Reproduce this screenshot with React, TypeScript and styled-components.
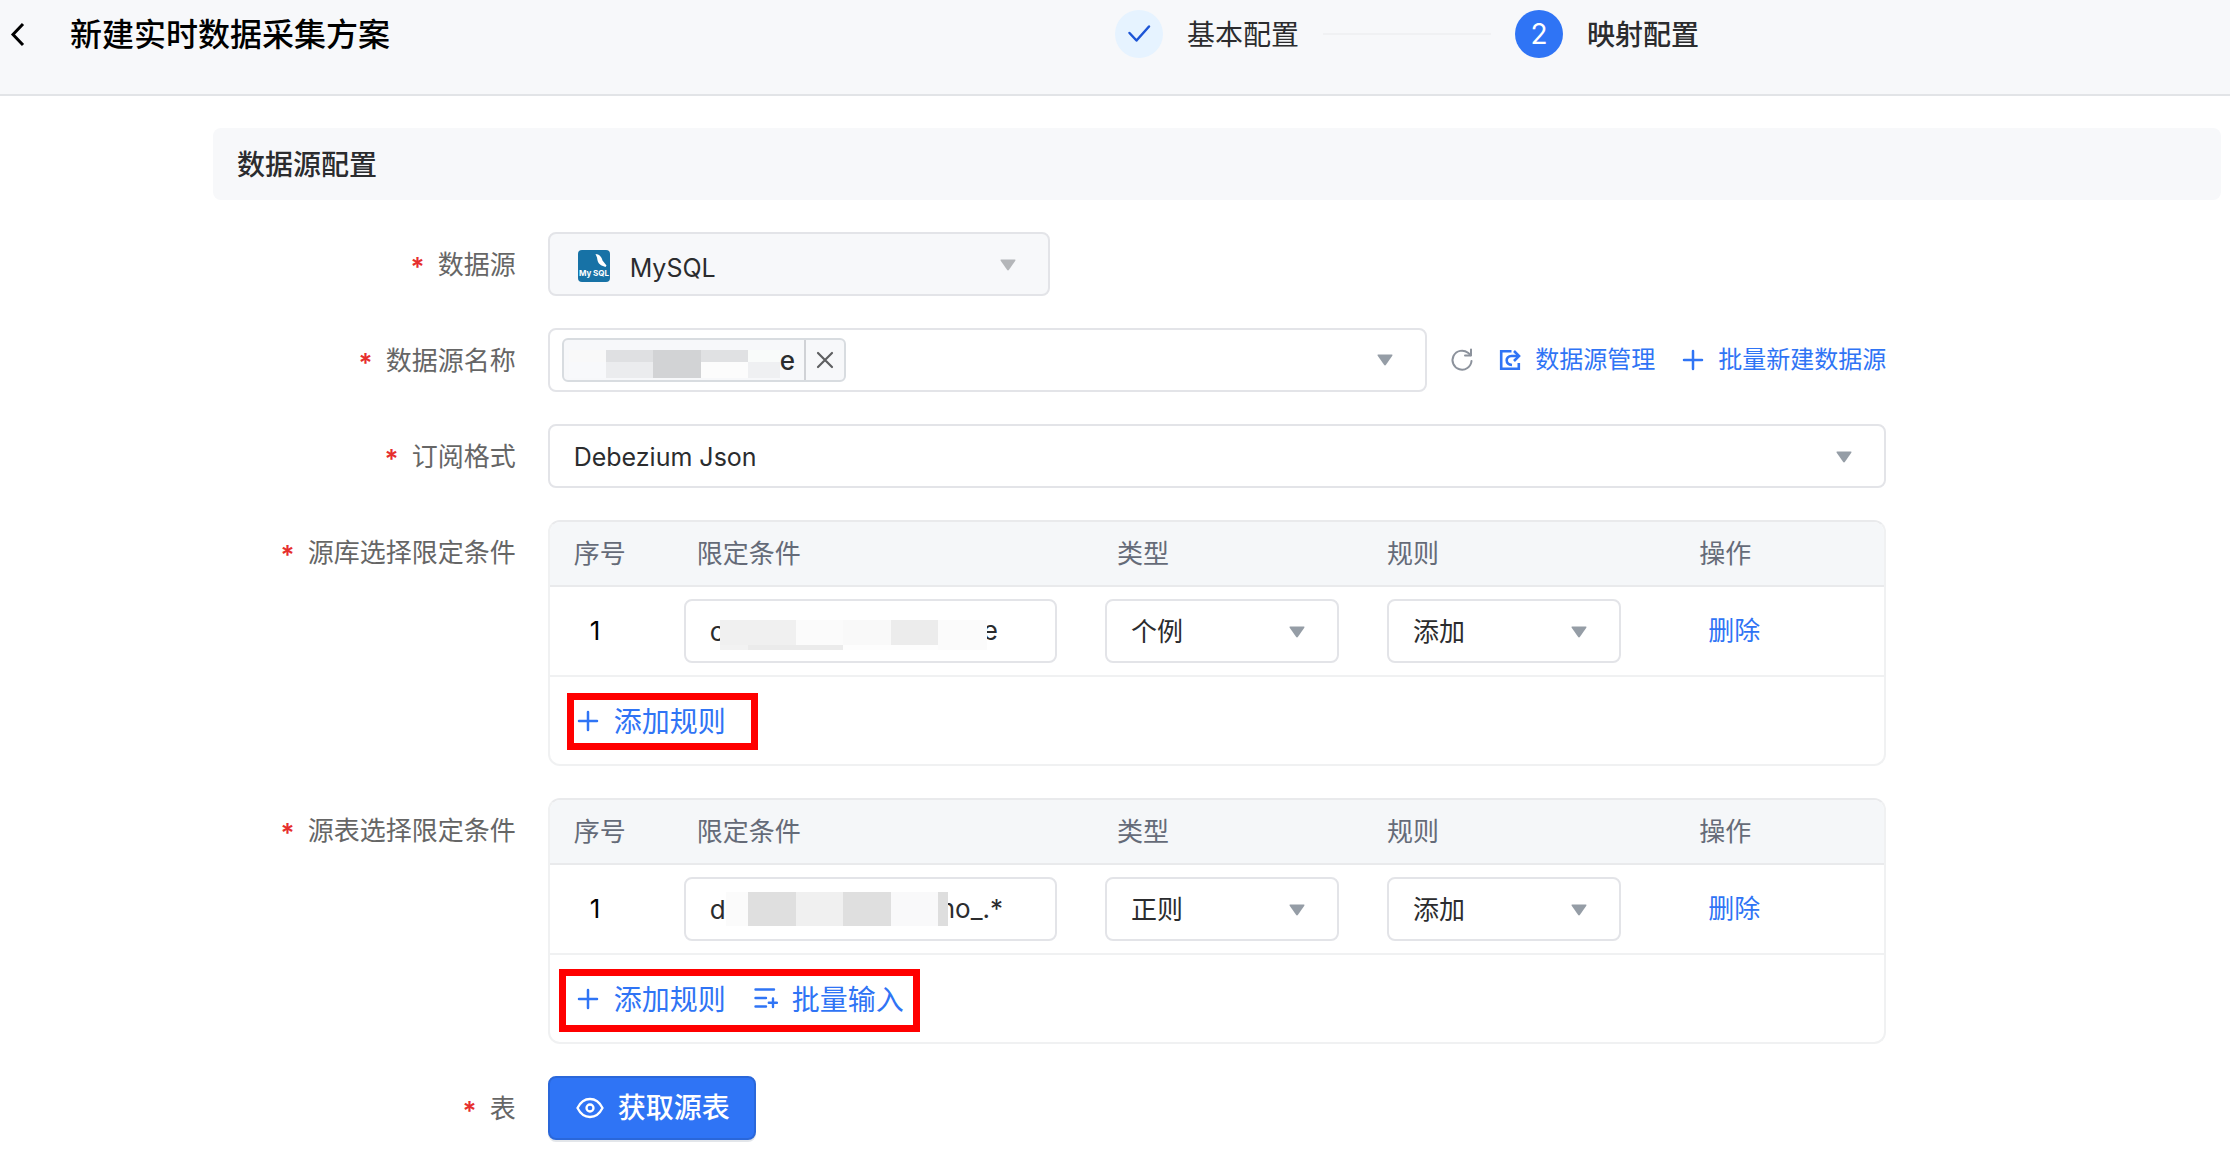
import React, { ReactNode, useState } from "react";
import styled, { createGlobalStyle } from "styled-components";

const color = {
  primary: "#2f74f5",
  primaryEdge: "#2a67da",
  surface: "#f7f8fa",
  headRow: "#f5f7f9",
  line: "#e3e4e8",
  softLine: "#f0f1f2",
  tableLine: "#e9eaec",
  text: "#2b2c2e",
  label: "#666666",
  head: "#656b78",
  arrow: "#959da6",
  danger: "#e62e2e",
};

const GlobalStyle = createGlobalStyle`
  *, *::before, *::after { box-sizing: border-box; }
  body {
    margin: 0;
    background: #fff;
    color: ${color.text};
    font: 400 26px/36px Inter, "Noto Sans CJK SC", sans-serif;
  }
  button, input, select { font: inherit; color: inherit; }
  button { border: 0; padding: 0; background: none; cursor: pointer; }
  svg { display: block; flex: none; }
`;

/* ---------- header ---------- */

const Header = styled.header`
  display: grid;
  grid-template-columns: 1fr 1fr;
  height: 96px;
  padding-top: 10px;
  background: ${color.surface};
  border-bottom: 2px solid #e2e4e7;
`;

const HeaderTitle = styled.div`
  display: flex;
  align-items: center;
  gap: 38px;
  height: 48px;
  padding-left: 4px;
`;

const Title = styled.h1`
  margin: 0;
  padding-top: 2px;
  color: #000;
  font-size: 32px;
  line-height: 48px;
  font-weight: 500;
`;

const Steps = styled.ol`
  display: flex;
  align-items: center;
  gap: 24px;
  height: 48px;
  margin: 0;
  padding: 0;
  list-style: none;
`;

const Step = styled.li<{ $active?: boolean }>`
  display: flex;
  align-items: center;
  gap: 24px;
  font-size: 28px;
  font-weight: ${(p) => (p.$active ? 500 : 400)};
`;

const StepMark = styled.span<{ $active?: boolean }>`
  display: grid;
  place-items: center;
  width: 48px;
  height: 48px;
  border-radius: 50%;
  color: ${(p) => (p.$active ? "#fff" : "#1d55d6")};
  background: ${(p) => (p.$active ? color.primary : "#e6f3ff")};
  font-weight: 400;
`;

const StepLine = styled.li`
  width: 168px;
  height: 2px;
  background: #f0f1f3;
`;

/* Text beside an icon; the padding centres the characters on it. */
const Caption = styled.span`
  padding-top: 2px;
`;

/* ---------- form ---------- */

const Main = styled.main`
  padding: 32px 9px 22px 213px;
`;

const SectionTitle = styled.h2`
  margin: 0 0 32px;
  padding: 2px 24px 0;
  border-radius: 8px;
  background: ${color.surface};
  font-size: 28px;
  line-height: 70px;
  font-weight: 500;
`;

const Form = styled.form`
  display: flex;
  flex-direction: column;
  gap: 32px;
`;

const FormRow = styled.div`
  display: grid;
  grid-template-columns: 4fr 16fr 4fr;
`;

const Label = styled.label`
  display: flex;
  justify-content: flex-end;
  gap: 13px;
  padding-right: 32px;
  color: ${color.label};
  line-height: 66px;
  max-height: 64px;
  white-space: nowrap;
`;

const Required = styled.span`
  padding-top: 2px;
  color: ${color.danger};
  font-weight: 600;
`;

const Controls = styled.div`
  display: flex;
  align-items: center;
  min-width: 0;
`;

const SelectBox = styled.div<{ $width?: string; $muted?: boolean }>`
  display: grid;
  grid-template-columns: minmax(0, 1fr);
  align-items: center;
  width: ${(p) => p.$width ?? "100%"};
  height: 64px;
  border: 2px solid ${color.line};
  border-radius: 8px;
  background: ${(p) => (p.$muted ? color.surface : "#fff")};
  color: ${(p) => (p.$muted ? "#b4b6b9" : color.arrow)};

  > * { grid-area: 1 / 1; }
  > svg { justify-self: end; margin: 2px 32px 0 0; pointer-events: none; }
`;

const NativeSelect = styled.select<{ $icon?: boolean; $latin?: boolean }>`
  width: 100%;
  height: 60px;
  padding: ${(p) => (p.$icon ? 8 : 2)}px 56px 0 ${(p) => (p.$icon ? 80 : 24)}px;
  border: 0;
  outline: 0;
  appearance: none;
  background: transparent;
  color: ${color.text};
  font-size: ${(p) => (p.$latin ? 25 : 26)}px;
  opacity: 1;
`;

const LeadIcon = styled.span`
  margin: 4px 0 0 28px;
  pointer-events: none;
`;

const TagSelect = styled.div`
  display: flex;
  align-items: center;
  flex: 1;
  height: 64px;
  padding: 0 32px 0 12px;
  border: 2px solid ${color.line};
  border-radius: 8px;
  color: ${color.arrow};
`;

const TagInput = styled.input`
  flex: 1;
  min-width: 0;
  border: 0;
  outline: 0;
`;

const Tag = styled.span`
  display: flex;
  align-items: center;
  height: 44px;
  border: 2px solid #d8dce0;
  border-radius: 6px;
  background: ${color.surface};
  color: ${color.text};
`;

const TagText = styled.span`
  display: flex;
  align-items: center;
  width: 240px;
  height: 40px;
  padding-left: 5px;
  font-weight: 500;
`;

const TagClose = styled.button`
  display: grid;
  place-items: center;
  width: 40px;
  height: 40px;
  border-left: 2px solid #d0d2d6;
  color: #5f6062;
`;

const IconButton = styled.button`
  margin-left: 23px;
  color: #8c929c;
`;

const LinkItem = styled.a<{ $gap: number }>`
  display: flex;
  align-items: center;
  gap: 13px;
  margin-left: ${(p) => p.$gap}px;
  color: ${color.primary};
  font-size: 24px;
  text-decoration: none;
  white-space: nowrap;
`;

/* ---------- rule table ---------- */

const TableCard = styled.div`
  width: 100%;
  border: 2px solid ${color.softLine};
  border-top-color: ${color.tableLine};
  border-radius: 12px;
`;

const Table = styled.table`
  width: 100%;
  table-layout: fixed;
  border-spacing: 0;
`;

const HeadCell = styled.th<{ $pad: number }>`
  height: 65px;
  padding: 0 0 0 ${(p) => p.$pad}px;
  border-bottom: 2px solid ${color.tableLine};
  background: ${color.headRow};
  color: ${color.head};
  font-weight: 400;
  text-align: left;

  &:first-child { border-top-left-radius: 10px; }
  &:last-child { border-top-right-radius: 10px; }
`;

const Cell = styled.td<{ $left?: number; $right?: number }>`
  height: 90px;
  padding: 0 ${(p) => p.$right ?? 0}px 0 ${(p) => p.$left ?? 0}px;
  border-bottom: 2px solid ${color.softLine};
`;

const Index = styled.span`
  color: #000;
`;

const TextBox = styled.div`
  display: flex;
  align-items: center;
  height: 64px;
  padding: 0 24px;
  border: 2px solid ${color.line};
  border-radius: 8px;
  overflow: hidden;
`;

const TextInput = styled.input<{ $width: number }>`
  flex: none;
  width: ${(p) => p.$width}px;
  height: 60px;
  padding: 0;
  border: 0;
  outline: 0;
`;

const MaskSvg = styled.svg<{ $overlap: number }>`
  z-index: 1;
  margin-right: ${(p) => -p.$overlap}px;
`;

const TextButton = styled.button<{ $large?: boolean }>`
  display: flex;
  align-items: center;
  gap: 14px;
  color: ${color.primary};
  font-size: ${(p) => (p.$large ? 28 : 26)}px;
  white-space: nowrap;
`;

const TableFoot = styled.div`
  position: relative;
  display: flex;
  align-items: center;
  gap: 28px;
  height: 87px;
  padding-left: 26px;
`;

const Highlight = styled.span<{ $wide?: boolean }>`
  position: absolute;
  left: ${(p) => (p.$wide ? 9 : 17)}px;
  top: ${(p) => (p.$wide ? 14 : 16)}px;
  width: ${(p) => (p.$wide ? 361 : 191)}px;
  height: ${(p) => (p.$wide ? 63 : 57)}px;
  border: 7px solid #ff0000;
  pointer-events: none;
`;

const PrimaryButton = styled.button`
  display: flex;
  align-items: center;
  gap: 14px;
  height: 64px;
  padding: 0 24px 0 26px;
  border: 2px solid ${color.primaryEdge};
  border-radius: 8px;
  background: ${color.primary};
  box-shadow: 0 2px 0 #e3e6ea;
  color: #fff;
  font-size: 28px;
  font-weight: 500;
`;

/* ---------- icons ---------- */

const BackIcon = () => (
  <svg width="28" height="28" viewBox="0 0 28 28" fill="none" stroke="#000" strokeWidth="3">
    <path d="M19 4L9 14.500L19 25" />
  </svg>
);

const CheckIcon = () => (
  <svg width="24" height="24" viewBox="0 0 24 24" fill="none" stroke="currentColor" strokeWidth="2.500" strokeLinecap="round" strokeLinejoin="round">
    <path d="M2.500 11L9.500 18.500L22 4.500" />
  </svg>
);

const ArrowIcon = () => (
  <svg width="16" height="12" viewBox="0 0 16 12" fill="currentColor">
    <path d="M1.200 0.500H14.800Q16 0.500 15.300 1.700L9 10.800Q8 12 7 10.800L0.700 1.700Q0 0.500 1.200 0.500Z" />
  </svg>
);

const CloseIcon = () => (
  <svg width="18" height="18" viewBox="0 0 18 18" fill="none" stroke="currentColor" strokeWidth="2.200" strokeLinecap="round">
    <path d="M2 2L16 16M16 2L2 16" />
  </svg>
);

const RefreshIcon = () => (
  <svg width="24" height="24" viewBox="0 0 24 24" fill="none" stroke="currentColor" strokeWidth="2" strokeLinecap="round" strokeLinejoin="round">
    <path d="M21.500 13A9.500 9.500 0 1 1 18 4.800L20.800 7.200" />
    <path d="M21 1.500V7.500H15" />
  </svg>
);

const JumpIcon = () => (
  <svg width="24" height="24" viewBox="0 0 24 24" fill="none" stroke="currentColor" strokeWidth="2.600">
    <path d="M13.500 3.200H3.200V20.800H20.800V15" />
    <path d="M14 17C7 16.500 7 8 13.500 8H20" />
    <path d="M16 3L21 8L16 13" />
  </svg>
);

const PlusIcon = () => (
  <svg width="24" height="24" viewBox="0 0 24 24" fill="none" stroke="currentColor" strokeWidth="2.500" strokeLinecap="round">
    <path d="M12 3V21M3 12H21" />
  </svg>
);

const ListPlusIcon = () => (
  <svg width="24" height="24" viewBox="0 0 24 24" fill="none" stroke="currentColor" strokeWidth="2.400" strokeLinecap="round">
    <path d="M1.500 2.500H20M1.500 11H12M1.500 19.500H12M19 11.500V20M14.800 15.800H23" />
  </svg>
);

const EyeIcon = () => (
  <svg width="28" height="24" viewBox="0 0 28 24" fill="none" stroke="currentColor" strokeWidth="2.300">
    <path d="M1.500 12C4.500 6 9 3 14 3S23.500 6 26.500 12C23.500 18 19 21 14 21S4.500 18 1.500 12Z" />
    <circle cx="14" cy="12" r="3.500" />
  </svg>
);

const LogoText = styled.text`
  font: 700 8px Inter, sans-serif;
`;

const MySqlIcon = () => (
  <svg width="32" height="32" viewBox="0 0 32 32">
    <rect width="32" height="32" rx="4" fill="#1772a6" />
    <path d="M17.500 4C21 4 23.500 6.500 24.500 10.500L28.500 15.500L27.500 17L23 15.200C19.500 13 19.500 10 19 7.500Z" fill="#fff" />
    <LogoText x="16" y="26" textAnchor="middle" fill="#fff">My SQL</LogoText>
  </svg>
);

/* ---------- masked values ---------- */

type Block = [x: number, y: number, w: number, h: number, fill: string];

const tagMask: Block[] = [
  [0, 0, 37, 12, "#f9f9f9"], [37, 0, 47, 12, "#dfe0e2"], [84, 0, 48, 28, "#d2d3d5"],
  [132, 0, 47, 12, "#e0e1e3"], [179, 0, 32, 12, "#f9fbfa"],
  [0, 12, 37, 16, "#f8f9fb"], [37, 12, 47, 16, "#ebecee"],
  [132, 12, 47, 16, "#fcfcfc"], [179, 12, 32, 16, "#eff0f2"],
];

const databaseMask: Block[] = [
  [0, 0, 76, 25, "#f0f0f0"], [76, 0, 47, 25, "#fbfbfb"], [123, 0, 48, 25, "#f9f9f9"],
  [171, 0, 47, 25, "#ececec"], [218, 0, 49, 30, "#fbfbfb"],
  [0, 25, 28, 5, "#f2f2f2"], [28, 25, 95, 5, "#ebebeb"], [123, 25, 95, 5, "#fdfdfd"],
];

const tableMask: Block[] = [
  [0, 0, 22, 34, "#fbfbfb"], [22, 0, 48, 34, "#dfdfdf"], [70, 0, 47, 34, "#f0f0f0"],
  [117, 0, 48, 34, "#dfdfdf"], [165, 0, 47, 34, "#f9f9fa"], [212, 0, 10, 34, "#dedede"],
];

function Mask({ blocks, width, height, boxHeight, overlap = 0 }: {
  blocks: Block[]; width: number; height: number; boxHeight: number; overlap?: number;
}) {
  return (
    <MaskSvg $overlap={overlap} width={width} height={boxHeight} viewBox={`0 ${height - boxHeight} ${width} ${boxHeight}`} aria-hidden="true">
      {blocks.map(([x, y, w, h, fill], i) => (
        <rect key={i} x={x} y={y} width={w} height={h} fill={fill} />
      ))}
    </MaskSvg>
  );
}

/* ---------- composed parts ---------- */

function Select({ id, name, options, width, muted, latin, icon }: {
  id?: string; name: string; options: string[]; width?: string; muted?: boolean; latin?: boolean; icon?: ReactNode;
}) {
  return (
    <SelectBox $width={width} $muted={muted}>
      <NativeSelect id={id} aria-label={id ? undefined : name} $icon={!!icon} $latin={latin} disabled={muted} defaultValue={options[0]}>
        {options.map((o) => <option key={o}>{o}</option>)}
      </NativeSelect>
      {icon && <LeadIcon>{icon}</LeadIcon>}
      <ArrowIcon />
    </SelectBox>
  );
}

function Field({ id, label, children }: { id: string; label: string; children: ReactNode }) {
  return (
    <FormRow>
      <Label htmlFor={id}><Required>*</Required>{label}</Label>
      <Controls>{children}</Controls>
    </FormRow>
  );
}

function RuleTable({ id, type, prefix, inputWidth, mask, suffix, batch }: {
  id: string; type: string; prefix: string; inputWidth: number; mask: ReactNode; suffix: string; batch?: boolean;
}) {
  const [value, setValue] = useState(prefix);
  return (
    <TableCard>
      <Table>
        <colgroup>
          <col width="134" /><col width="421" /><col width="282" /><col width="312" /><col width="185" />
        </colgroup>
        <thead>
          <tr>
            <HeadCell $pad={24}>序号</HeadCell>
            <HeadCell $pad={13}>限定条件</HeadCell>
            <HeadCell $pad={12}>类型</HeadCell>
            <HeadCell $pad={0}>规则</HeadCell>
            <HeadCell $pad={0}>操作</HeadCell>
          </tr>
        </thead>
        <tbody>
          <tr>
            <Cell $left={40}><Index>1</Index></Cell>
            <Cell $right={48}>
              <TextBox>
                <TextInput id={id} $width={inputWidth} value={value} onChange={(e) => setValue(e.target.value)} />
                {mask}
                <span>{suffix}</span>
              </TextBox>
            </Cell>
            <Cell $right={48}><Select name="类型" options={[type]} /></Cell>
            <Cell $right={78}><Select name="规则" options={["添加"]} /></Cell>
            <Cell $left={9}><TextButton type="button">删除</TextButton></Cell>
          </tr>
        </tbody>
      </Table>
      <TableFoot>
        <TextButton type="button" $large><PlusIcon /><Caption>添加规则</Caption></TextButton>
        {batch && <TextButton type="button" $large><ListPlusIcon /><Caption>批量输入</Caption></TextButton>}
        <Highlight $wide={batch} />
      </TableFoot>
    </TableCard>
  );
}

export default function App() {
  return (
    <>
      <GlobalStyle />
      <Header>
        <HeaderTitle>
          <button type="button" aria-label="返回"><BackIcon /></button>
          <Title>新建实时数据采集方案</Title>
        </HeaderTitle>
        <Steps>
          <Step><StepMark><CheckIcon /></StepMark><Caption>基本配置</Caption></Step>
          <StepLine aria-hidden="true" />
          <Step $active aria-current="step"><StepMark $active>2</StepMark><Caption>映射配置</Caption></Step>
        </Steps>
      </Header>
      <Main>
        <SectionTitle>数据源配置</SectionTitle>
        <Form onSubmit={(e) => e.preventDefault()}>
          <Field id="source" label="数据源">
            <Select id="source" name="数据源" options={["MySQL"]} width="37.5%" muted latin icon={<MySqlIcon />} />
          </Field>
          <Field id="source-name" label="数据源名称">
            <TagSelect>
              <Tag>
                <TagText>
                  <Mask blocks={tagMask} width={211} height={28} boxHeight={36} />
                  <Caption>e</Caption>
                </TagText>
                <TagClose type="button" aria-label="移除"><CloseIcon /></TagClose>
              </Tag>
              <TagInput id="source-name" />
              <ArrowIcon />
            </TagSelect>
            <IconButton type="button" aria-label="刷新"><RefreshIcon /></IconButton>
            <LinkItem href="#manage" $gap={24}><JumpIcon />数据源管理</LinkItem>
            <LinkItem href="#batch" $gap={26}><PlusIcon />批量新建数据源</LinkItem>
          </Field>
          <Field id="format" label="订阅格式">
            <Select id="format" name="订阅格式" options={["Debezium Json"]} latin />
          </Field>
          <Field id="database-rule" label="源库选择限定条件">
            <RuleTable
              id="database-rule"
              type="个例"
              prefix="c"
              inputWidth={10}
              mask={<Mask blocks={databaseMask} width={267} height={30} boxHeight={38} overlap={4} />}
              suffix="e"
            />
          </Field>
          <Field id="table-rule" label="源表选择限定条件">
            <RuleTable
              id="table-rule"
              type="正则"
              prefix="d"
              inputWidth={16}
              mask={<Mask blocks={tableMask} width={222} height={34} boxHeight={34} overlap={8} />}
              suffix="no_.*"
              batch
            />
          </Field>
          <Field id="fetch" label="表">
            <PrimaryButton id="fetch" type="button"><EyeIcon />获取源表</PrimaryButton>
          </Field>
        </Form>
      </Main>
    </>
  );
}
